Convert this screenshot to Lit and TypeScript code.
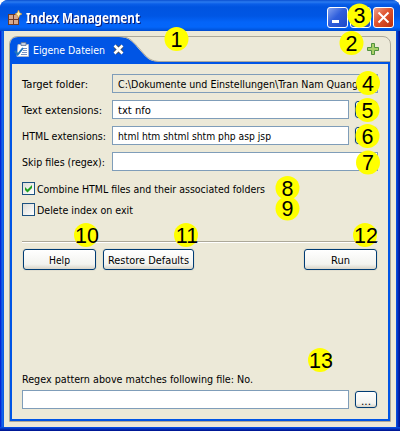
import { LitElement, html, svg, css } from "lit";
import { customElement, property } from "lit/decorators.js";

/** One line of UI text, fitted to a fixed advance width. */
@customElement("ui-text")
class UiText extends LitElement {
  @property() text = "";
  @property({ type: Number }) width = 50;
  static styles = css`
    :host { display: block; flex: none; height: 16px; color: #000; }
    svg { display: block; overflow: visible; }
    text { font: 11px "DejaVu Sans Condensed", "DejaVu Sans", sans-serif; font-stretch: condensed; fill: currentColor; white-space: pre; }
  `;
  render() {
    return html`<svg width=${this.width} height="16">
      <text x="0" y="12" textLength=${this.width} lengthAdjust="spacingAndGlyphs">${this.text}</text>
    </svg>`;
  }
}

const badges: [number, number, number][] = [
  [1, 176.5, 39], [2, 351.5, 43], [3, 359.5, 15.5], [4, 368, 83], [5, 367.5, 110],
  [6, 367.5, 136], [7, 368, 162.5], [8, 287.5, 188], [9, 287.5, 208.5],
  [10, 86, 235], [11, 186, 235], [12, 365, 235], [13, 320, 360],
];

@customElement("app-root")
class AppRoot extends LitElement {
  static styles = css`
    :host { display: block; position: relative; width: 401px; height: 432px; background: #fff; overflow: hidden; }
    * { box-sizing: border-box; }
    .window { width: 400px; height: 431px; display: flex; flex-direction: column; border-radius: 8px 8px 0 0;
      background:
        linear-gradient(#0855dd 0, #0441d8 1px, #001ea0 3px, #00138c 4px) 0 100% / 100% 4px no-repeat,
        linear-gradient(90deg, #0019cf 0, #0831d9 1px, #166aee 2px, #0855dd 4px, #0855dd 396px, #0441d8 397px, #001ea0 399px, #00138c 400px);
      overflow: hidden; }
    .title { height: 31px; flex: none; display: flex; align-items: center; padding: 4px 4px 0 8px;
      background: linear-gradient(#0a4fd0 0, #2a7bf0 2px, #0a5ee8 4px, #0054e0 7px, #0056e4 16px, #0464f8 22px, #0466fa 27px, #0054dc 30px, #0048cc 31px); }
    .title svg { display: block; flex: none; }
    .caption { flex: 1; margin: 1px 0 0 4px; filter: drop-shadow(1px 1px 0 #0b1f7a); }
    .caption svg { overflow: visible; }
    .caption text { font: bold 14.5px "Noto Sans", sans-serif; fill: #fff; }
    .controls { display: flex; gap: 2px; margin-right: 2px; }
    .ctl { width: 21px; height: 21px; border: 1px solid #fff; border-radius: 3px; background: linear-gradient(135deg, #84a2f0, #2f5fdc 45%, #1e49c8); }
    .ctl.close { background: linear-gradient(135deg, #f0a088, #df5430 45%, #bc300c); }
    .client { flex: 1; margin: 0 4px 4px; padding: 5px; background: #ece9d8; }
    .folder { width: 382px; height: 386px; display: flex; flex-direction: column; border: 1px solid #aca899; border-radius: 8px 8px 0 0; }
    .tabs { height: 25px; flex: none; display: flex; border-bottom: 1px solid #aca899; }
    .tab { position: relative; width: 150px; height: 25px; display: flex; align-items: center; padding-left: 4px; color: #fff; }
    .tab > * { position: relative; }
    .tab > .shape { position: absolute; left: 0; top: -1px; }
    .tab ui-text { color: #fff; margin-left: 3px; }
    .x { margin-left: 8px; }
    .plus { margin: 5px 10px 0 auto; }
    .body { flex: 1; border: 2px solid #0055e5; padding: 10px 10px 8px 10px; display: flex; flex-direction: column; }
    .row { display: flex; height: 19px; margin-bottom: 7px; }
    .lab { width: 90px; flex: none; padding-top: 2px; }
    .input { flex: 1; min-width: 0; height: 19px; border: 1px solid #7f9db9; background: #fff; padding: 1px 0 0 5px; overflow: hidden; }
    .input.ro { background: #ece9d8; }
    .btn { height: 21px; flex: none; display: flex; justify-content: center; align-items: center; border: 1px solid #003c74; border-radius: 3px; background: linear-gradient(#fff, #f3f3ef 75%, #d9d4c8); box-shadow: 0 0 0 1px #e2dfd1; }
    .dots { width: 22px; height: 17px; margin: 1px 1px 0 6px; padding-top: 2px; }
    .check { display: flex; height: 13px; margin-bottom: 8px; }
    .check.first { margin-top: 4px; }
    .box { width: 13px; height: 13px; margin-right: 2px; border: 1px solid #1c5180; background: linear-gradient(135deg, #dcdcd7, #fff); }
    .box svg { display: block; }
    .check ui-text { margin-top: -1px; }
    .rule { height: 2px; margin-top: 17px; border-top: 1px solid #aca899; border-bottom: 1px solid #fff; }
    .actions { display: flex; gap: 7px; margin: 6px 1px 0; }
    .help { width: 73px; } .restore { width: 91px; } .run { width: 73px; margin-left: auto; }
    .foot { margin-top: auto; }
    .foot ui-text { margin-bottom: 3px; }
    .foot .dots ui-text { margin: 0; }
    .foot .row { margin: 0 0 2px; }
    .overlay { position: absolute; left: 0; top: 0; pointer-events: none; }
    .overlay text { font: 21.5px "Liberation Sans", Arial, sans-serif; text-anchor: middle; fill: #000; }
  `;

  private field(label: string, lw: number, value: string, vw: number, kind = "") {
    return html`<div class="row">
      <div class="lab"><ui-text .text=${label} .width=${lw}></ui-text></div>
      <div class="input ${kind === "ro" ? "ro" : ""}">${value ? html`<ui-text .text=${value} .width=${vw}></ui-text>` : ""}</div>
      ${kind === "btn" ? this.button() : ""}
    </div>`;
  }
  private button(label = "") {
    return html`<div class="btn dots">${label ? html`<ui-text .text=${label} .width=${10}></ui-text>` : ""}</div>`;
  }

  render() {
    return html`
      <div class="window">
        <div class="title">
          <svg width="14" height="16" viewBox="0 0 14 16">
            <path d="M0 4h11v11H0z" fill="#6d3b2a"/>
            <path d="M1 5h4v4H1zM6 5h4v4H6zM1 10h4v4H1zM6 10h4v4H6z" fill="#d9a98c"/>
            <path d="M10.500 0l1.200 2.800L14 4l-2.300 1.200L10.500 8 9.300 5.200 7 4l2.300-1.200z" fill="#fff0b0" stroke="#d99020" stroke-width=".6"/>
          </svg>
          <div class="caption"><svg width="115" height="18"><text x="0" y="14" textLength="114" lengthAdjust="spacingAndGlyphs">Index Management</text></svg></div>
          <div class="controls">
            <div class="ctl"><svg width="19" height="19"><path d="M4 12h7v3H4z" fill="#fff"/></svg></div>
            <div class="ctl"><svg width="19" height="19"><path d="M4 5h11v10H4z" fill="none" stroke="#fff" stroke-width="2"/></svg></div>
            <div class="ctl close"><svg width="19" height="19"><path d="M4.500 4.500l10 10m0-10l-10 10" stroke="#fff" stroke-width="2"/></svg></div>
          </div>
        </div>
        <div class="client">
          <div class="folder">
            <div class="tabs">
              <div class="tab">
                <svg class="shape" width="150" height="27"><path d="M0 27V8Q1 1 8 1H109C118 1 122 5 127 11L135 20C139 24 142 25 148 26V27z" fill="#0055e5"/><path d="M109 .5C118 .5 122 4 127.500 10.500L135 19C139 23 142 25 149 25.500" fill="none" stroke="#aca899"/></svg>
                <svg width="16" height="16" viewBox="0 0 16 16">
                  <path d="M4 2.500h10.500v12H3z" fill="#fff" stroke="#a9b6cc"/>
                  <path d="M7 .5h5v3H7z" fill="#c4cfe0" stroke="#617394" stroke-width=".8"/>
                  <path d="M9 6.500h4M9 8.500h4M8 10.500h5M7 12.500h6" stroke="#7894c4"/>
                  <path d="M.8 9l3 3.500L9 6" fill="none" stroke="#2077bd" stroke-width="2"/>
                </svg>
                <ui-text text="Eigene Dateien" .width=${72}></ui-text>
                <svg class="x" width="11" height="11" viewBox="0 0 11 11"><path d="M2 2l7 7m0-7l-7 7" stroke="#4a4a4a" stroke-width="4.200"/><path d="M1.500 1.500l8 8m0-8l-8 8" stroke="#fff" stroke-width="2.600"/></svg>
              </div>
              <svg class="plus" width="14" height="14" viewBox="0 0 14 14"><path d="M5.500 1.500h3v4h4v3h-4v4h-3v-4h-4v-3h4z" fill="#a9cf68" stroke="#50923e"/></svg>
            </div>
            <div class="body">
              ${this.field("Target folder:", 66, "C:\\Dokumente und Einstellungen\\Tran Nam Quang", 240, "ro")}
              ${this.field("Text extensions:", 80, "txt nfo", 33, "btn")}
              ${this.field("HTML extensions:", 84, "html htm shtml shtm php asp jsp", 153, "btn")}
              ${this.field("Skip files (regex):", 83, "", 0)}
              <div class="check first">
                <div class="box"><svg width="11" height="11"><path d="M2 4v3l2.500 2.500L9 5V2L4.500 6.500z" fill="#21a121"/></svg></div>
                <ui-text text="Combine HTML files and their associated folders" .width=${228}></ui-text>
              </div>
              <div class="check">
                <div class="box"></div>
                <ui-text text="Delete index on exit" .width=${96}></ui-text>
              </div>
              <div class="rule"></div>
              <div class="actions">
                <div class="btn help"><ui-text text="Help" .width=${21}></ui-text></div>
                <div class="btn restore"><ui-text text="Restore Defaults" .width=${81}></ui-text></div>
                <div class="btn run"><ui-text text="Run" .width=${19}></ui-text></div>
              </div>
              <div class="foot">
                <ui-text text="Regex pattern above matches following file: No." .width=${231}></ui-text>
                <div class="row"><div class="input"></div>${this.button("...")}</div>
              </div>
            </div>
          </div>
        </div>
      </div>
      <svg class="overlay" width="401" height="432">
        ${badges.map(([n, x, y]) => svg`<circle cx=${x} cy=${y} r="12" fill="#ff0"/><text x=${n > 9 ? x + 1 : x} y=${y + 7.5}>${n}</text>`)}
      </svg>`;
  }
}
